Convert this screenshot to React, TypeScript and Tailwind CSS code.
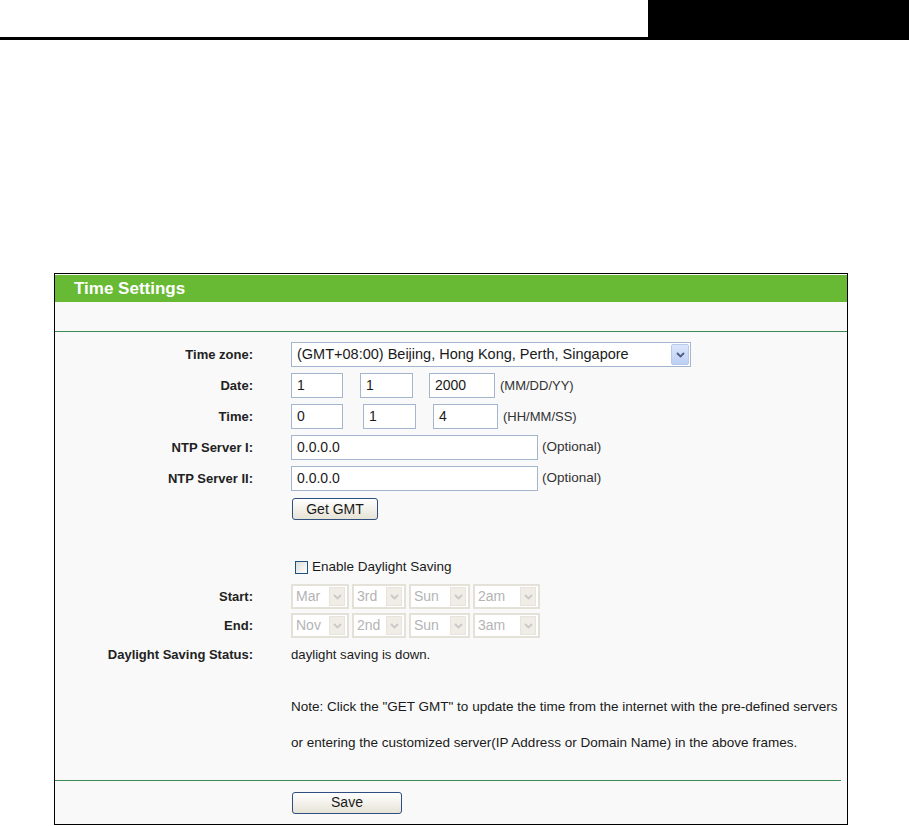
import type { ReactNode } from "react";

function Chevron({ color }: { color: string }) {
  return (
    <svg width="9" height="6" viewBox="0 0 9 6">
      <polyline
        points="1,1 4.5,4.5 8,1"
        fill="none"
        stroke={color}
        strokeWidth="1.8"
      />
    </svg>
  );
}

function Row({
  label,
  className,
  children,
}: {
  label?: string;
  className: string;
  children?: ReactNode;
}) {
  return (
    <div className={`flex items-center ${className}`}>
      <div className="w-[198px] shrink-0 text-right text-[13px] font-bold text-[#222]">
        {label}
      </div>
      <div className="ml-[38px] flex items-center">{children}</div>
    </div>
  );
}

function TextBox({ value, w }: { value: string; w: string }) {
  return (
    <div
      className={`${w} flex h-[25px] items-center border border-[#a3b6cd] bg-white pl-[5px] text-[14px] text-[#1a1a1a]`}
    >
      {value}
    </div>
  );
}

function DisabledSelect({ value, w }: { value: string; w: string }) {
  return (
    <div
      className={`${w} flex h-[25px] items-center justify-between border-2 border-[#e4e1d8] bg-white pl-[3px] pr-[2px] text-[14px] text-[#b4b4b4]`}
    >
      <span>{value}</span>
      <div className="flex h-[19px] w-[16px] items-center justify-center border border-[#e6e4dc] bg-[#efede6]">
        <Chevron color="#c9c9c9" />
      </div>
    </div>
  );
}

export default function App() {
  return (
    <div className="min-h-[826px] bg-white font-['Liberation_Sans',Arial,sans-serif]">
      {/* page header */}
      <div className="flex h-[40px]">
        <div className="flex-1 border-b-[3px] border-black" />
        <div className="w-[261px] bg-black" />
      </div>

      {/* settings panel */}
      <div className="ml-[54px] mt-[233px] w-[794px] border border-black bg-[#f9f9f9] pt-px">
        <div className="flex h-[27px] items-center bg-[#68b934] pl-[19px] text-[17px] font-bold text-white">
          Time Settings
        </div>
        <div className="h-[29px]" />
        <div className="h-px bg-[#3b8a56]" />

        <div className="pt-[7px]">
          <Row label="Time zone:" className="h-[31px]">
            <div className="flex h-[25px] w-[400px] items-center justify-between border border-[#a3b6cd] bg-white pl-[5px] pr-px text-[14.5px] text-[#1a1a1a]">
              <span>(GMT+08:00) Beijing, Hong Kong, Perth, Singapore</span>
              <div className="flex h-[21px] w-[18px] items-center justify-center rounded-[2px] border border-[#b7c8ea] bg-gradient-to-b from-[#dbe6fb] to-[#bccff3]">
                <Chevron color="#4a5d82" />
              </div>
            </div>
          </Row>
          <Row label="Date:" className="h-[31px]">
            <TextBox value="1" w="w-[52px]" />
            <div className="ml-[17px]">
              <TextBox value="1" w="w-[53px]" />
            </div>
            <div className="ml-[16px]">
              <TextBox value="2000" w="w-[66px]" />
            </div>
            <span className="ml-[5px] text-[13px] text-[#333]">(MM/DD/YY)</span>
          </Row>
          <Row label="Time:" className="h-[31px]">
            <TextBox value="0" w="w-[52px]" />
            <div className="ml-[20px]">
              <TextBox value="1" w="w-[53px]" />
            </div>
            <div className="ml-[17px]">
              <TextBox value="4" w="w-[65px]" />
            </div>
            <span className="ml-[5px] text-[13px] text-[#333]">(HH/MM/SS)</span>
          </Row>
          <Row label="NTP Server I:" className="h-[31px]">
            <TextBox value="0.0.0.0" w="w-[247px]" />
            <span className="ml-[4px] text-[13.5px] text-[#333]">(Optional)</span>
          </Row>
          <Row label="NTP Server II:" className="h-[31px]">
            <TextBox value="0.0.0.0" w="w-[247px]" />
            <span className="ml-[4px] text-[13.5px] text-[#333]">(Optional)</span>
          </Row>
          <Row className="h-[30px]">
            <button className="ml-px flex h-[22px] w-[86px] items-center justify-center rounded-[3px] border border-[#2f4f80] bg-gradient-to-b from-white to-[#e6e3d6] text-[14px] text-[#1a1a1a]">
              Get GMT
            </button>
          </Row>

          <div className="h-[29px]" />

          <Row className="h-[29px]">
            <div className="ml-[4px] h-[13px] w-[13px] border border-[#1c5180] bg-gradient-to-br from-[#dcdcd7] to-white" />
            <span className="ml-[4px] text-[13.5px] text-[#1a1a1a]">
              Enable Daylight Saving
            </span>
          </Row>
          <Row label="Start:" className="h-[29px]">
            <DisabledSelect value="Mar" w="w-[58px]" />
            <div className="ml-[3px]">
              <DisabledSelect value="3rd" w="w-[54px]" />
            </div>
            <div className="ml-[3px]">
              <DisabledSelect value="Sun" w="w-[61px]" />
            </div>
            <div className="ml-[3px]">
              <DisabledSelect value="2am" w="w-[67px]" />
            </div>
          </Row>
          <Row label="End:" className="h-[29px]">
            <DisabledSelect value="Nov" w="w-[58px]" />
            <div className="ml-[3px]">
              <DisabledSelect value="2nd" w="w-[54px]" />
            </div>
            <div className="ml-[3px]">
              <DisabledSelect value="Sun" w="w-[61px]" />
            </div>
            <div className="ml-[3px]">
              <DisabledSelect value="3am" w="w-[67px]" />
            </div>
          </Row>
          <Row label="Daylight Saving Status:" className="h-[30px]">
            <span className="text-[13.2px] text-[#1a1a1a]">daylight saving is down.</span>
          </Row>

          <div className="h-[19px]" />

          <Row className="h-[36px]">
            <span className="whitespace-nowrap text-[13.5px] text-[#1a1a1a]">
              Note: Click the "GET GMT" to update the time from the internet with the
              pre-defined servers
            </span>
          </Row>
          <Row className="h-[36px]">
            <span className="whitespace-nowrap text-[13.5px] text-[#1a1a1a]">
              or entering the customized server(IP Address or Domain Name) in the above
              frames.
            </span>
          </Row>

          <div className="h-[19px]" />
        </div>

        <div className="mr-[6px] h-px bg-[#3b8a56]" />
        <Row className="h-[43px]">
          <button className="ml-px flex h-[22px] w-[110px] items-center justify-center rounded-[3px] border border-[#2f4f80] bg-gradient-to-b from-white to-[#e6e3d6] text-[14px] text-[#1a1a1a]">
            Save
          </button>
        </Row>
      </div>
    </div>
  );
}
